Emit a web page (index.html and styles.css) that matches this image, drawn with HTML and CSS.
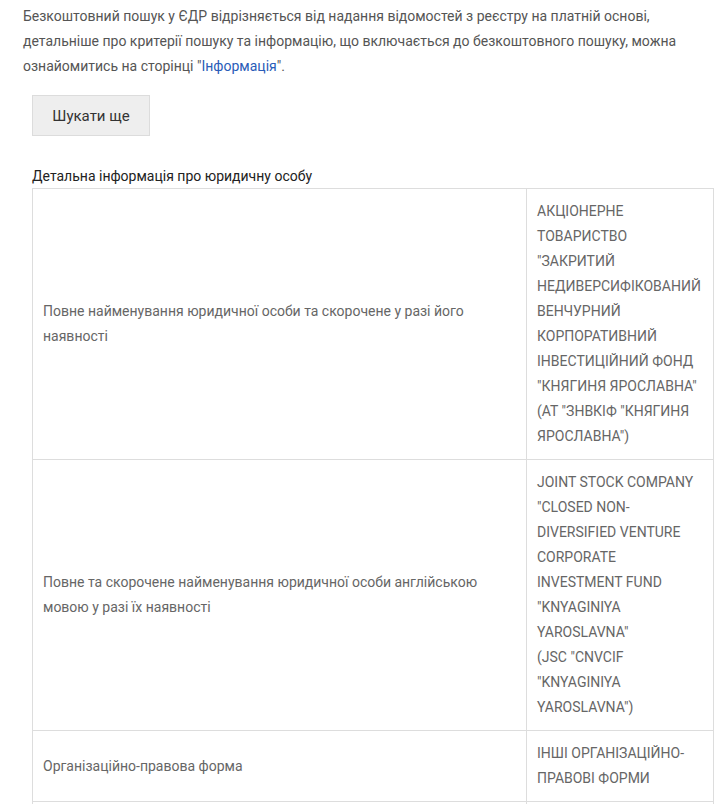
FILE: index.html
```html
<!DOCTYPE html>
<html lang="uk">
<head>
<meta charset="utf-8">
<title>Детальна інформація</title>
<link rel="stylesheet" href="styles.css">
</head>
<body>
<div class="page">
  <p class="intro">Безкоштовний пошук у ЄДР відрізняється від надання відомостей з реєстру на платній основі,<br>детальніше про критерії пошуку та інформацію, що включається до безкоштовного пошуку, можна<br>ознайомитись на сторінці "<a href="#" class="link">Інформація</a>".</p>
  <div class="actions">
    <button class="btn" type="button">Шукати ще</button>
  </div>
  <table class="details">
    <caption>Детальна інформація про юридичну особу</caption>
    <tbody>
      <tr>
        <td class="label">Повне найменування юридичної особи та скорочене у разі його<br>наявності</td>
        <td class="value">АКЦІОНЕРНЕ<br>ТОВАРИСТВО<br>"ЗАКРИТИЙ<br>НЕДИВЕРСИФІКОВАНИЙ<br>ВЕНЧУРНИЙ<br>КОРПОРАТИВНИЙ<br>ІНВЕСТИЦІЙНИЙ ФОНД<br>"КНЯГИНЯ ЯРОСЛАВНА"<br>(АТ "ЗНВКІФ "КНЯГИНЯ<br>ЯРОСЛАВНА")</td>
      </tr>
      <tr>
        <td class="label">Повне та скорочене найменування юридичної особи англійською<br>мовою у разі їх наявності</td>
        <td class="value">JOINT STOCK COMPANY<br>"CLOSED NON-<br>DIVERSIFIED VENTURE<br>CORPORATE<br>INVESTMENT FUND<br>"KNYAGINIYA<br>YAROSLAVNA"<br>(JSC "CNVCIF<br>"KNYAGINIYA<br>YAROSLAVNA")</td>
      </tr>
      <tr>
        <td class="label">Організаційно-правова форма</td>
        <td class="value">ІНШІ ОРГАНІЗАЦІЙНО-<br>ПРАВОВІ ФОРМИ</td>
      </tr>
      <tr>
        <td class="label">&nbsp;</td>
        <td class="value">&nbsp;</td>
      </tr>
    </tbody>
  </table>
</div>
</body>
</html>
```

FILE: styles.css
```css
html, body {
  margin: 0;
  padding: 0;
  background: #fff;
}

body {
  font-family: Roboto, "Noto Sans", sans-serif;
  font-size: 14px;
  color: #555;
}

.page {
  padding: 4px 0 0 23px;
}

.intro {
  margin: 0;
  line-height: 25px;
  color: #555;
  white-space: nowrap;
}

.link {
  color: #2a5cb8;
  text-decoration: none;
}

.actions {
  padding: 16px 0 0 9px;
}

.btn {
  width: 118px;
  height: 41px;
  background: #eeeeee;
  border: 1px solid #dcdcdc;
  border-radius: 0;
  font-family: inherit;
  font-size: 15px;
  color: #333;
  padding: 0;
}

.details {
  margin: 29px 0 0 9px;
  width: 682px;
  border-collapse: collapse;
}

.details caption {
  text-align: left;
  color: #222;
  font-size: 14px;
  line-height: 23px;
  white-space: nowrap;
}

.details td {
  border: 1px solid #dddddd;
  padding: 10px 10px;
  line-height: 25px;
  color: #666;
  vertical-align: middle;
  white-space: nowrap;
}

.details td.label {
  width: 473px;
}

.details td.value {
  width: 166px;
}
```
